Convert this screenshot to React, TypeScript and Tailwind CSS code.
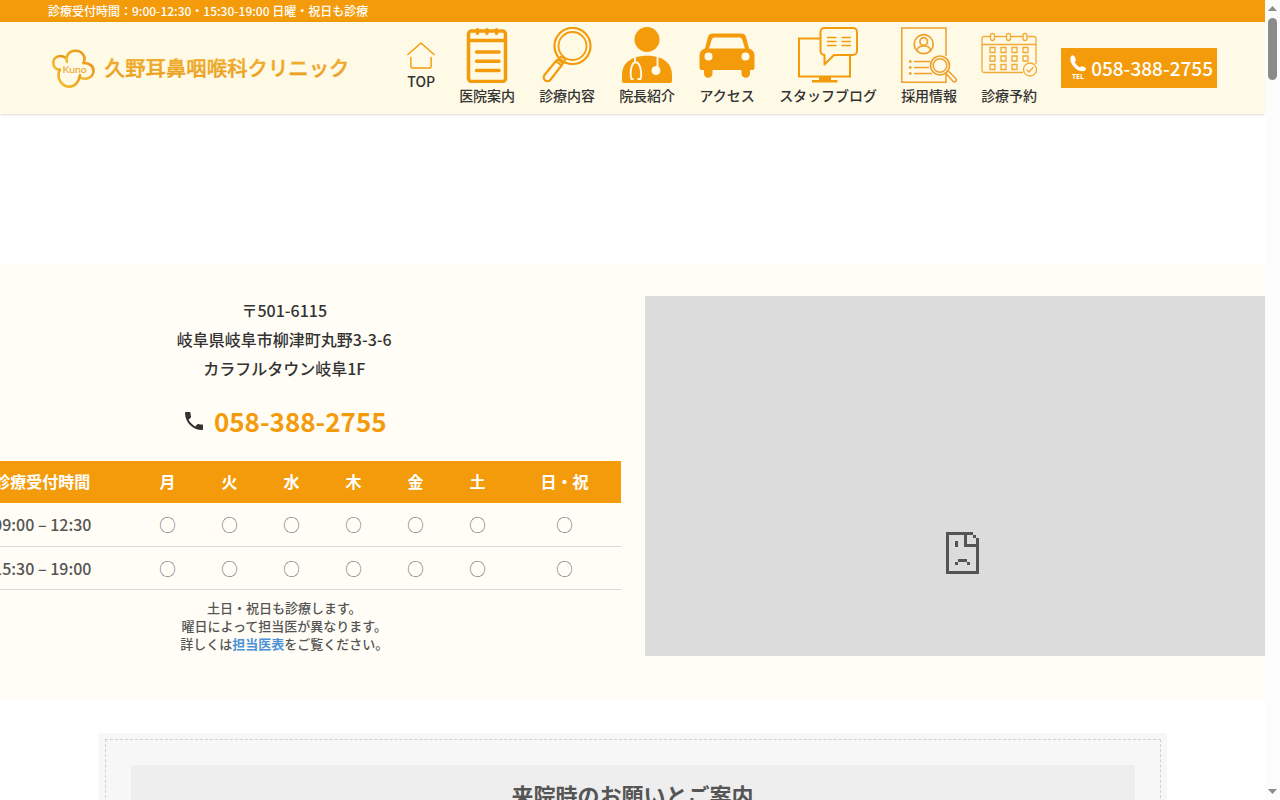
import type { ReactNode } from "react";

const days = ["月", "火", "水", "木", "金", "土", "日・祝"];
const hours = ["09:00 – 12:30", "15:30 – 19:00"];

function Logo() {
  return (
    <svg viewBox="0 0 3060 560" className="h-14 w-[306px]" role="img" aria-label="久野耳鼻咽喉科クリニック">
      <defs>
        <linearGradient id="petal" x1="0" y1="1" x2="1" y2="0">
          <stop offset="0" stopColor="#f3c02f" />
          <stop offset="1" stopColor="#e89217" />
        </linearGradient>
        <linearGradient id="name" x1="0" y1="0" x2="0" y2="1">
          <stop offset="0" stopColor="#f0b434" />
          <stop offset="1" stopColor="#ea9a1c" />
        </linearGradient>
      </defs>
      <g fill="none" stroke="url(#petal)" strokeWidth="26" strokeLinecap="round" strokeLinejoin="round">
        <path d="M168 174 C125 145 54 165 53 226 C52 272 82 298 118 298" />
        <path d="M190 220 C172 165 205 108 276 108 C345 108 385 175 354 232" />
        <path d="M356 230 C410 228 458 262 455 310 C451 370 392 402 330 380" />
        <path d="M118 298 C82 370 128 468 214 466 C270 463 312 418 320 352" />
      </g>
      <text x="146" y="327" fontSize="104" fill="#f0a93a" stroke="#f0a93a" strokeWidth="2" fontFamily="Lato, sans-serif">Kuno</text>
      <text x="568" y="360" fontSize="204" fontWeight="500" fill="url(#name)" stroke="url(#name)" strokeWidth="4" fontFamily='"Noto Sans CJK JP", sans-serif'>
        久野耳鼻咽喉科クリニック
      </text>
    </svg>
  );
}

const HomeIcon = (
  <svg viewBox="0 0 29 29" className="size-7" fill="none" stroke="#f39b0b" strokeWidth="1.5" strokeLinecap="round" strokeLinejoin="round">
    <path d="M1 14 L14.5 2 L28 14" />
    <path d="M4 17V26.500a1.500 1.500 0 0 0 1.500 1.500H23.500a1.500 1.500 0 0 0 1.500-1.500V17" />
  </svg>
);

const NotepadIcon = (
  <svg viewBox="0 0 56 56" className="size-14" fill="none" stroke="#f39b0b" strokeWidth="3.500" strokeLinecap="round">
    <rect x="9.500" y="4" width="37" height="50.500" rx="3" />
    <path d="M9 13.500H47" strokeLinecap="butt" />
    <path d="M17.500 25H40M17.500 34.300H40M17.500 43.500H40" />
    <path d="M18.500 2.500V6.500M28 2.500V6.500M37.500 2.500V6.500" strokeWidth="3.200" />
  </svg>
);

const LoupeIcon = (
  <svg viewBox="0 0 56 56" className="size-14" fill="none" stroke="#f39b0b">
    <circle cx="33.500" cy="19" r="18" strokeWidth="2.200" />
    <circle cx="33.500" cy="19" r="14" strokeWidth="1.800" />
    <path d="M17 34 L5.500 48 a3.800 3.800 0 0 0 6 4.700 L22.500 38.500 Z" strokeWidth="2.200" strokeLinejoin="round" />
    <path d="M16.500 34.500 L19 32.500 L24 36.500 L22 39" strokeWidth="2" />
    <path d="M19 33 L22 29.500 L26.500 33 L23.500 36.500" strokeWidth="1.500" />
  </svg>
);

const DoctorIcon = (
  <svg viewBox="0 0 56 56" className="size-14" fill="none">
    <circle cx="28" cy="12.500" r="12.500" fill="#f39b0b" />
    <path d="M3 54V48C3 38 9 33 16 30.500C23 28 33 28 40 30.500C47 33 53 38 53 48V54a2 2 0 0 1-2 2H5a2 2 0 0 1-2-2Z" fill="#f39b0b" />
    <path d="M16 30V35.500M38.500 29V40" stroke="#fffae5" strokeWidth="1.900" />
    <path d="M14.500 52H12.500C11 48 11.500 41 13.500 37.500C15 34.500 18.500 34.500 20 37.500C22 41 23 48 21.500 52H18.500" stroke="#fffae5" strokeWidth="1.900" />
    <circle cx="37" cy="43.500" r="4.500" fill="#fffae5" />
  </svg>
);

const CarIcon = (
  <svg viewBox="0 0 56 56" className="size-14">
    <path fillRule="evenodd" fill="#f39b0b" d="M14 6.500H42C45 6.500 46.500 8 47.200 10.500L50 21.500C53.500 22.500 55.500 25 55.500 28.500V41a2 2 0 0 1-2 2H51V46.500a4.200 4.200 0 0 1-8.500 0V43H13.500V46.500a4.200 4.200 0 0 1-8.500 0V43H2.500a2 2 0 0 1-2-2V28.500C.5 25 2.500 22.500 6 21.500L8.800 10.500C9.500 8 11 6.500 14 6.500ZM15 10.500Q13.500 10.500 13 12L10 21.500H46L43 12Q42.500 10.500 41 10.500ZM9.500 25.500a4 4 0 1 0 0 8a4 4 0 0 0 0-8ZM46.500 25.500a4 4 0 1 0 0 8a4 4 0 0 0 0-8Z" />
  </svg>
);

const BlogIcon = (
  <svg viewBox="0 0 60 56" className="h-14 w-15" fill="none" stroke="#f39b0b">
    <path d="M23 11.500H1V49.500H52V28" strokeWidth="2" />
    <path d="M21 50H33V53H39.500V55.500H14V53H21Z" fill="#f39b0b" stroke="none" />
    <path d="M26.500 1H55a4 4 0 0 1 4 4V24a4 4 0 0 1-4 4H36L26.500 37.500V28a4 4 0 0 1-4-4V5a4 4 0 0 1 4-4Z" strokeWidth="2" strokeLinejoin="round" />
    <path d="M29 10.500H38.500M29 14.500H38.500M29 18.500H38.500M43.500 10.500H53M43.500 14.500H53M43.500 18.500H53" strokeWidth="1.400" />
  </svg>
);

const ResumeIcon = (
  <svg viewBox="0 0 56 56" className="size-14" fill="none" stroke="#eda02c">
    <path d="M45 29V1H.8V55.200H45V43" strokeWidth="1.500" />
    <circle cx="22.700" cy="17.200" r="9.500" strokeWidth="1.700" />
    <circle cx="22.700" cy="14.500" r="3.800" strokeWidth="1.700" />
    <path d="M16 24C16 20.500 19 19 22.700 19S29.500 20.500 29.500 24" strokeWidth="1.700" />
    <path d="M8 34.500H10.500M8 40.500H10.500M8 46.500H10.500" strokeWidth="2.500" />
    <path d="M13 34.500H29M13 40.500H28M13 46.500H31" strokeWidth="1.700" />
    <circle cx="39" cy="38.500" r="9.500" strokeWidth="1.700" fill="#fffae5" />
    <circle cx="39" cy="38.500" r="6.800" strokeWidth="1.500" />
    <path d="M45 46.500L52 54.200a1.800 1.800 0 0 0 3-2.500L47.300 44" strokeWidth="1.600" />
  </svg>
);

const CalendarIcon = (
  <svg viewBox="0 0 56 56" className="size-14" fill="none" stroke="#f3a935" strokeWidth="1.300">
    <path d="M42 45.500H3a2 2 0 0 1-2-2V11.500a2 2 0 0 1 2-2H53a2 2 0 0 1 2 2V37" />
    <path d="M1 17.500H55" />
    <g fill="#fffae5">
      <rect x="9.500" y="6.500" width="4" height="7" rx="2" />
      <rect x="25.500" y="6.500" width="4" height="7" rx="2" />
      <rect x="42" y="6.500" width="4" height="7" rx="2" />
    </g>
    <path d="M9 20.500h5v5h-5ZM20 20.500h5v5h-5ZM31 20.500h5v5h-5ZM42 20.500h5v5h-5ZM9 29h5v5h-5ZM20 29h5v5h-5ZM31 29h5v5h-5ZM42 29h5v5h-5ZM9 37.500h5v5h-5ZM20 37.500h5v5h-5ZM31 37.500h5v5h-5Z" />
    <circle cx="49" cy="42.500" r="6.500" fill="#fffae5" />
    <path d="M45.500 42.500l2.500 2.500l4.500-5" />
  </svg>
);

const navItems: { label: string; icon: ReactNode }[] = [
  { label: "TOP", icon: HomeIcon },
  { label: "医院案内", icon: NotepadIcon },
  { label: "診療内容", icon: LoupeIcon },
  { label: "院長紹介", icon: DoctorIcon },
  { label: "アクセス", icon: CarIcon },
  { label: "スタッフブログ", icon: BlogIcon },
  { label: "採用情報", icon: ResumeIcon },
  { label: "診療予約", icon: CalendarIcon },
];

function Header() {
  return (
    <header>
      <p className="bg-[#f39b0b] px-12 text-xs leading-[22px] font-medium text-white">
        診療受付時間：9:00-12:30・15:30-19:00 日曜・祝日も診療
      </p>
      <div className="flex h-[92px] items-center justify-between bg-[#fffae5] px-12 shadow-sm">
        <a href="#top" className="shrink-0">
          <Logo />
        </a>
        <nav className="flex items-center gap-6">
          {navItems.map((item) => (
            <a key={item.label} href="#" className="flex shrink-0 flex-col items-center pb-0.5 text-sm leading-6 font-medium whitespace-nowrap text-[#333]">
              {item.icon}
              {item.label}
            </a>
          ))}
          <a href="tel:058-388-2755" className="flex h-10 shrink-0 items-center gap-1 bg-[#f39b0b] pr-1 pl-2 text-white">
            <svg viewBox="0 0 18 28" className="h-7 w-[18px]" role="img" aria-label="TEL">
              <path fill="#fff" d="M3.200 1.200C1 2.500.8 6 2.600 9.500C5 14 9 17 13 17.300C15.500 17.400 17 16 17 14.800C16.500 13.300 14 12 12.500 12.200L11 13.300C9 12.800 6.300 9.800 5.900 8L7 6.300C7 4.500 5.500 1 3.200 1.200Z" />
              <text x="9" y="25" textAnchor="middle" fontSize="7" fontWeight="700" fill="#fff" fontFamily='"Open Sans", sans-serif'>TEL</text>
            </svg>
            <span className="text-[19px] font-medium">058-388-2755</span>
          </a>
        </nav>
      </div>
    </header>
  );
}

function Access() {
  return (
    <section className="overflow-hidden bg-[#fffdf5] pt-8 pb-11">
      <div className="-mx-[52px] flex gap-6">
        <div className="flex-1 text-center text-[#333]">
          <address className="leading-[29px] font-medium not-italic">
            〒501-6115
            <br />
            岐阜県岐阜市柳津町丸野3-3-6
            <br />
            カラフルタウン岐阜1F
          </address>
          <a href="tel:058-388-2755" className="mt-[18px] flex items-center justify-center gap-2 text-[26px] leading-10 font-bold text-[#f39b0b]">
            <svg viewBox="0 0 24 24" className="size-6" fill="#333">
              <path d="M6.620 10.790c1.440 2.830 3.760 5.140 6.590 6.590l2.200-2.200c.27-.27.67-.36 1.020-.24 1.120.37 2.330.57 3.570.57.55 0 1 .45 1 1V20c0 .55-.45 1-1 1-9.390 0-17-7.610-17-17 0-.55.45-1 1-1h3.500c.55 0 1 .45 1 1 0 1.250.2 2.450.57 3.570.11.35.03.74-.25 1.020l-2.200 2.200z" />
            </svg>
            058-388-2755
          </a>
          <table className="mt-5 w-full table-fixed border-collapse">
            <colgroup>
              <col />
              {days.map((day) => (
                <col key={day} className={day === "日・祝" ? "w-28" : "w-[62px]"} />
              ))}
            </colgroup>
            <thead className="bg-[#f39b0b] text-white">
              <tr className="h-[42px]">
                <th scope="col" className="pb-0.5 font-bold">診療受付時間</th>
                {days.map((day) => (
                  <th key={day} scope="col" className="pb-0.5 font-bold">{day}</th>
                ))}
              </tr>
            </thead>
            <tbody className="text-[#555]">
              {hours.map((time) => (
                <tr key={time} className="h-[43px] border-b border-[#d8d8d8]">
                  <th scope="row" className="font-medium">{time}</th>
                  {days.map((day) => (
                    <td key={day}>◯</td>
                  ))}
                </tr>
              ))}
            </tbody>
          </table>
          <p className="mt-[9px] text-[13px] leading-[18px] font-medium text-[#555]">
            土日・祝日も診療します。
            <br />
            曜日によって担当医が異なります。
            <br />
            詳しくは<a href="#doctors" className="font-bold text-[#4b92d9]">担当医表</a>をご覧ください。
          </p>
        </div>
        <div className="flex-1">
          <div className="flex h-[360px] items-center justify-center bg-[#dcdcdc] pt-[154px] pr-9">
            <svg viewBox="0 0 11 14" className="h-[42px] w-[33px]" fill="#545454" shapeRendering="crispEdges" role="img" aria-label="地図を表示できません">
              <path d="M0 0H9V1H1V13H10V5H6V1H7V4H10V2H11V14H0ZM9 1H10V2H9ZM3 3H4V5H3ZM4 9H7V10H4ZM3 10H4V11H3ZM7 10H8V11H7Z" />
            </svg>
          </div>
        </div>
      </div>
    </section>
  );
}

function Notice() {
  return (
    <section className="mx-auto mt-[33px] w-full max-w-[1068px] bg-[#f7f7f7] p-1.5">
      <div className="border border-dashed border-[#d0d0d0] p-[25px]">
        <h2 className="rounded-xs bg-[#eee] py-3.5 text-center text-[22px] leading-[30px] font-bold text-[#555]">
          来院時のお願いとご案内
        </h2>
      </div>
    </section>
  );
}

export default function App() {
  return (
    <div className="flex h-screen overflow-hidden bg-white font-['Noto_Sans_CJK_JP',sans-serif]">
      <main className="min-w-0 flex-1 overflow-hidden">
        <Header />
        <div className="h-[150px]" />
        <Access />
        <Notice />
      </main>
      <div aria-hidden="true" className="flex w-[15px] shrink-0 flex-col items-center justify-between bg-[#fcfcfc] py-1.5">
        <div className="flex flex-col items-center gap-[7px]">
          <svg viewBox="0 0 9 5" className="h-[5px] w-[9px]" fill="#8b8b8b"><path d="M0 5L4.500 0L9 5Z" /></svg>
          <div className="h-[62px] w-[9px] rounded-full bg-[#8b8b8b]" />
        </div>
        <svg viewBox="0 0 9 5" className="h-[5px] w-[9px]" fill="#8b8b8b"><path d="M0 0H9L4.500 5Z" /></svg>
      </div>
    </div>
  );
}
